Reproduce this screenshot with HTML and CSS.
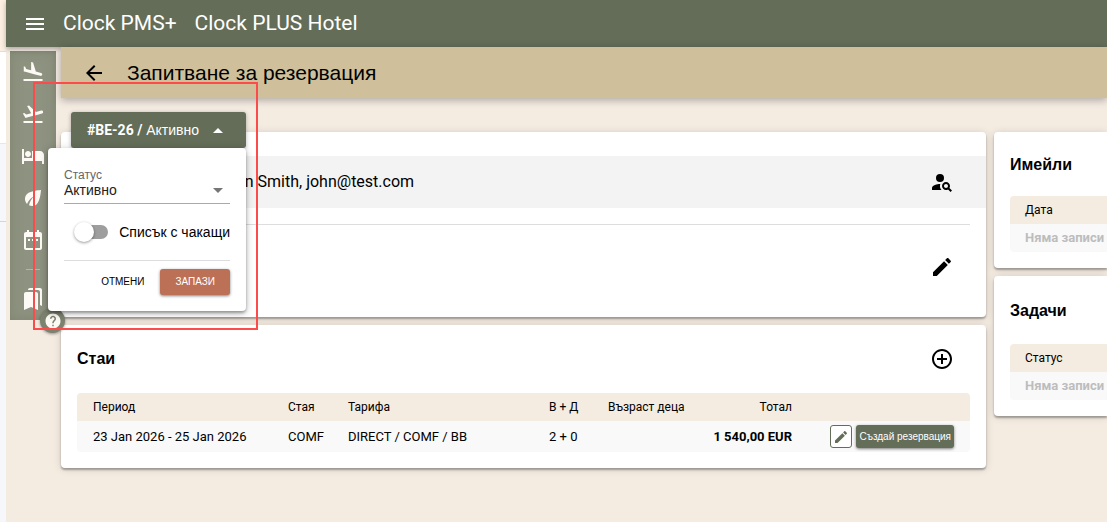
FILE: index.html
```html
<!DOCTYPE html>
<html lang="bg">
<head>
<meta charset="utf-8">
<title>Clock PMS+</title>
<link rel="stylesheet" href="styles.css">
</head>
<body>
<div class="edge"><div class="edge-top"></div><div class="edge-mid"></div><div class="edge-low"></div></div>
<div class="app">
  <header class="topbar">
    <button class="icon-btn" aria-label="Меню"><svg class="icon" viewBox="0 0 24 24"><path d="M3 18h18v-2H3v2zm0-5h18v-2H3v2zm0-7v2h18V6H3z"/></svg></button>
    <span class="brand">Clock PMS+</span>
    <span class="hotel">Clock PLUS Hotel</span>
  </header>
  <div class="body">
    <nav class="side">
      <a href="#" aria-label="Пристигащи"><svg class="icon" viewBox="0 0 24 24"><path d="M2.5 19h19v2h-19zm7.18-5.73l4.35 1.16 5.31 1.42c.8.21 1.62-.26 1.84-1.06.21-.8-.26-1.62-1.06-1.84l-5.31-1.42-2.76-9.02L10.12 2v8.28L5.15 8.95l-.93-2.32-1.45-.39v5.17l1.6.43 5.31 1.43z"/></svg></a>
      <a href="#" aria-label="Заминаващи"><svg class="icon" viewBox="0 0 24 24"><path d="M2.5 19h19v2h-19zm19.57-9.36c-.21-.8-1.04-1.28-1.84-1.06L14.92 10l-6.9-6.43-1.93.51 4.14 7.17-4.97 1.33-1.97-1.54-1.45.39 1.82 3.16.77 1.33 1.6-.43 5.31-1.42 4.35-1.16L21 11.49c.81-.23 1.28-1.05 1.07-1.85z"/></svg></a>
      <a href="#" aria-label="Настанени"><svg class="icon" viewBox="0 0 24 24"><path d="M7 13c1.66 0 3-1.34 3-3S8.66 7 7 7s-3 1.34-3 3 1.34 3 3 3zm12-6h-8v7H3V5H1v15h2v-3h18v3h2v-9c0-2.21-1.79-4-4-4z"/></svg></a>
      <a href="#" aria-label="Еко"><svg class="icon" viewBox="0 0 24 24"><path d="M6.05 8.05c-2.73 2.73-2.73 7.15-.02 9.88 1.47-3.4 4.09-6.24 7.36-7.93-2.77 2.34-4.71 5.61-5.39 9.32 2.6 1.23 5.8.78 7.95-1.37C19.43 14.47 20 4 20 4S9.53 4.57 6.05 8.05z"/></svg></a>
      <a href="#" aria-label="Календар"><svg class="icon" viewBox="0 0 24 24"><path d="M9 11H7v2h2v-2zm4 0h-2v2h2v-2zm4 0h-2v2h2v-2zm2-7h-1V2h-2v2H8V2H6v2H5c-1.11 0-1.99.9-1.99 2L3 20c0 1.1.89 2 2 2h14c1.1 0 2-.9 2-2V6c0-1.1-.9-2-2-2zm0 16H5V9h14v11z"/></svg></a>
      <span class="side-line"></span>
      <a href="#" aria-label="Отметки"><svg class="icon" viewBox="0 0 24 24"><path d="M19 18l2 1V3c0-1.1-.9-2-2-2H8.99C7.89 1 7 1.9 7 3h10c1.1 0 2 .9 2 2v13zM15 5H5c-1.1 0-2 .9-2 2v16l7-3 7 3V7c0-1.1-.9-2-2-2z"/></svg></a>
      <button class="help" aria-label="Помощ"><svg class="help-icon" viewBox="0 0 24 24"><path d="M12 2C6.48 2 2 6.48 2 12s4.48 10 10 10 10-4.48 10-10S17.52 2 12 2zm1 17h-2v-2h2v2zm2.07-7.75l-.9.92C13.45 12.9 13 13.5 13 15h-2v-.5c0-1.1.45-2.1 1.17-2.83l1.24-1.26c.37-.36.59-.86.59-1.41 0-1.1-.9-2-2-2s-2 .9-2 2H8c0-2.21 1.79-4 4-4s4 1.79 4 4c0 .88-.36 1.68-.93 2.25z"/></svg></button>
    </nav>
    <main class="main">
      <div class="titlebar">
        <button class="icon-btn" aria-label="Назад"><svg class="icon" viewBox="0 0 24 24"><path d="M20 11H7.83l5.59-5.59L12 4l-8 8 8 8 1.41-1.41L7.83 13H20v-2z"/></svg></button>
        <h1>Запитване за резервация</h1>
      </div>
      <div class="content">
        <div class="status">
          <button class="status-btn"><span class="status-text"><b>#BE-26 /</b> Активно</span><svg class="caret" viewBox="0 0 10 5"><path d="M0 5l5-5 5 5z"/></svg></button>
          <form class="menu">
            <label class="field-label" for="status">Статус</label>
            <div class="select-box">
              <select id="status"><option>Активно</option></select>
              <svg class="caret" viewBox="0 0 10 5"><path d="M0 0l5 5 5-5z"/></svg>
            </div>
            <div class="toggle">
              <input type="checkbox" id="wait"><label for="wait">Списък с чакащи</label>
            </div>
            <div class="actions">
              <button type="button" class="cancel">ОТМЕНИ</button>
              <button type="button" class="save">ЗАПАЗИ</button>
            </div>
          </form>
        </div>
        <div class="col">
          <section class="card guest">
            <div class="guest-row"><span>John Smith, john@test.com</span>
              <button class="icon-btn" aria-label="Търсене на гост"><svg class="icon" viewBox="0 0 24 24"><circle cx="10" cy="8" r="4"/><path d="M10.35 14.01C7.62 13.91 2 15.27 2 18v2h9.54c-2.47-2.76-1.23-5.89-1.19-5.99zM19.43 18.02c.36-.59.57-1.28.57-2.02 0-2.21-1.79-4-4-4s-4 1.79-4 4 1.79 4 4 4c.74 0 1.43-.22 2.02-.57L20.59 22 22 20.59l-2.57-2.57zM16 18c-1.1 0-2-.9-2-2s.9-2 2-2 2 .9 2 2-.9 2-2 2z"/></svg></button>
            </div>
            <div class="details">
              <button class="icon-btn" aria-label="Редактиране"><svg class="icon" viewBox="0 0 24 24"><path d="M3 17.25V21h3.75L17.81 9.94l-3.75-3.75L3 17.25zM20.71 7.04c.39-.39.39-1.02 0-1.41l-2.34-2.34c-.39-.39-1.02-.39-1.41 0l-1.83 1.83 3.75 3.75 1.83-1.83z"/></svg></button>
            </div>
          </section>
          <section class="card">
            <div class="card-head"><h2>Стаи</h2>
              <button class="icon-btn" aria-label="Добавяне"><svg class="icon" viewBox="0 0 24 24"><path d="M13 7h-2v4H7v2h4v4h2v-4h4v-2h-4V7zm-1-5C6.48 2 2 6.48 2 12s4.48 10 10 10 10-4.48 10-10S17.52 2 12 2zm0 18c-4.41 0-8-3.59-8-8s3.59-8 8-8 8 3.59 8 8-3.59 8-8 8z"/></svg></button>
            </div>
            <table class="rooms">
              <colgroup><col><col class="c-room"><col class="c-rate"><col class="c-pax"><col class="c-age"><col class="c-total"><col class="c-act"></colgroup>
              <thead><tr><th>Период</th><th>Стая</th><th>Тарифа</th><th>В + Д</th><th>Възраст деца</th><th class="num">Тотал</th><th></th></tr></thead>
              <tbody><tr><td>23 Jan 2026 - 25 Jan 2026</td><td>COMF</td><td>DIRECT / COMF / BB</td><td>2 + 0</td><td></td><td class="num"><b>1 540,00 EUR</b></td>
                <td><div class="row-actions">
                  <button class="edit" aria-label="Редактиране на стая"><svg viewBox="0 0 24 24"><path d="M3 17.25V21h3.75L17.81 9.94l-3.75-3.75L3 17.25zM20.71 7.04c.39-.39.39-1.02 0-1.41l-2.34-2.34c-.39-.39-1.02-.39-1.41 0l-1.83 1.83 3.75 3.75 1.83-1.83z"/></svg></button>
                  <button class="create">Създай резервация</button>
                </div></td></tr></tbody>
            </table>
          </section>
        </div>
        <aside class="col">
          <section class="card side-card"><h2>Имейли</h2>
            <table><thead><tr><th>Дата</th></tr></thead><tbody><tr><td class="empty">Няма записи</td></tr></tbody></table>
          </section>
          <section class="card side-card"><h2>Задачи</h2>
            <table><thead><tr><th>Статус</th></tr></thead><tbody><tr><td class="empty">Няма записи</td></tr></tbody></table>
          </section>
        </aside>
      </div>
    </main>
  </div>
</div>
<div class="highlight"></div>
</body>
</html>
```
FILE: styles.css
```css
* { box-sizing: border-box; }
body { margin: 0; min-height: 100vh; display: flex; overflow: hidden; background: #f4ebe1; color: #000; font: 14px/20px Roboto, "Liberation Sans", sans-serif; }
button, select { font: inherit; color: inherit; border: 0; margin: 0; padding: 0; background: none; }
h1, h2 { margin: 0; }
svg { display: block; fill: currentColor; }
.icon { width: 24px; height: 24px; }
.icon-btn { flex: none; }

.edge { flex: 0 0 6px; display: flex; flex-direction: column; background: #f5f7fa; }
.edge-top { height: 52px; background: #fdf0e3; border-bottom: 1px solid #d9e0e8; }
.edge-mid { height: 92px; background: #fff; border-bottom: 1px solid #e3e8ed; }
.edge-low { height: 78px; border-bottom: 1px solid #cbd8e4; }

.app { flex: 1; min-width: 0; display: flex; flex-direction: column; }
.topbar { position: relative; z-index: 1; height: 47px; flex: none; display: flex; align-items: center; padding: 0 17px; background: #646d58; color: #fff; font-size: 21px; line-height: 28px; box-shadow: 0 2px 5px rgba(0,0,0,.3); }
.brand { margin: 0 18px 0 16px; }
.topbar span { padding-bottom: 2px; }
.body { flex: 1; display: flex; align-items: flex-start; }

.side { position: relative; flex: 0 0 46px; margin: 4px 5px 0 4px; padding: 9px 0; display: flex; flex-direction: column; align-items: center; gap: 18px; background: #8e9280; color: #fdf9f5; box-shadow: inset 0 0 12px #7f8571; }
.side a { color: inherit; }
.side-line { width: 14px; height: 1px; margin: -1px 0; background: #b5b8a9; }
.help { position: absolute; right: -9px; bottom: -13px; width: 25px; height: 25px; border-radius: 50%; display: grid; place-items: center; background: #7b826d; color: #fdf9f5; z-index: 2; box-shadow: 0 1px 3px rgba(0,0,0,.4); }
.help-icon { width: 18px; height: 18px; }

.main { flex: 1; min-width: 0; }
.titlebar { position: relative; z-index: 2; height: 51px; display: flex; align-items: center; gap: 21px; padding-left: 21px; background: #cfc09b; box-shadow: 0 2px 8px rgba(0,0,0,.3); }
h1 { font: 400 21px/28px "Liberation Sans", sans-serif; }
.content { position: relative; display: grid; grid-template-columns: minmax(0, 1fr) 113px; gap: 8px; padding-top: 34px; }
.col { display: flex; flex-direction: column; gap: 8px; }
.card { background: #fff; border-radius: 4px; box-shadow: 0 2px 2px rgba(0,0,0,.3), 0 1px 8px rgba(0,0,0,.14); }

.guest { padding-top: 24px; }
.guest-row { height: 52px; display: flex; align-items: center; justify-content: space-between; padding: 0 32px 0 157px; background: #f3f3f3; font-size: 16px; line-height: 22px; }
.details { height: 93px; margin: 16px 16px 0; padding: 0 16px 8px 0; display: flex; align-items: center; justify-content: flex-end; border-top: 1px solid #ddd; }
.card-head { height: 68px; display: flex; align-items: center; justify-content: space-between; padding: 0 32px 0 16px; }
h2 { font: 700 16px/26px "Liberation Sans", sans-serif; }

table { border-collapse: separate; border-spacing: 0; border-radius: 4px; overflow: hidden; font-size: 12px; line-height: 16px; }
th { height: 28px; padding: 0 0 0 16px; text-align: left; font-weight: 400; background: #f4ebe1; white-space: nowrap; }
td { height: 31px; padding: 0 0 0 16px; background: #f9f9f9; white-space: nowrap; }
.rooms { width: calc(100% - 32px); margin: 0 16px; table-layout: fixed; }
.rooms td { font-size: 13px; }
.card:has(.rooms) { padding-bottom: 16px; }
.rooms .num { text-align: right; padding: 0 16px 0 0; }
.c-room { width: 60px; }
.c-rate { width: 201px; }
.c-pax { width: 59px; }
.c-age { width: 108px; }
.c-total { width: 108px; }
.c-act { width: 162px; }
.row-actions { display: flex; justify-content: flex-end; gap: 4px; padding-right: 16px; }
.edit { width: 22px; height: 23px; padding: 2px; border: 1px solid #646d58; border-radius: 3px; color: #646d58; background: #fff; }
.create { height: 23px; padding: 0 3px; border-radius: 3px; background: #646d58; color: #fff; font: 10px/16px "Liberation Sans", sans-serif; box-shadow: 0 1px 3px rgba(0,0,0,.5); }

.side-card { padding: 20px 0 16px 16px; border-radius: 4px 0 0 4px; }
.side-card table { width: 100%; margin-top: 18px; border-radius: 4px 0 0 4px; }
.side-card th, .side-card td { height: 28px; padding-left: 15px; }
.side-card + .side-card { padding-top: 22px; }
.side-card + .side-card table { margin-top: 20px; }
td.empty { color: #bdbdbd; font-weight: 700; font-size: 13px; }

.status { position: absolute; z-index: 3; left: 10px; top: 14px; }
.status-btn { display: flex; align-items: center; justify-content: space-between; width: 175px; height: 36px; padding: 0 23px 0 16px; border-radius: 3px; background: #646d58; color: #fff; box-shadow: 0 1px 4px rgba(0,0,0,.3); }
.status-text { font-family: "Liberation Sans", sans-serif; }
.status-text b { font-family: Roboto, sans-serif; }
.caret { width: 10px; height: 5px; }
.menu { position: absolute; right: 0; top: 36px; width: 198px; padding: 20px 16px 16px; background: #fff; border-radius: 4px; box-shadow: 0 2px 3px rgba(0,0,0,.3), 0 2px 8px rgba(0,0,0,.25); font-family: "Liberation Sans", sans-serif; }
.field-label { display: block; font-size: 12px; line-height: 14px; color: #666; }
.select-box { display: flex; align-items: center; border-bottom: 1px solid #aaa; padding: 0 7px 5px 0; color: #757575; }
.select-box select { flex: 1; height: 16px; line-height: 16px; appearance: none; color: #222; }
.toggle { display: flex; align-items: center; justify-content: space-between; padding: 18px 0 18px 18px; }
.toggle input { appearance: none; position: relative; width: 26px; height: 14px; margin: 0; border-radius: 7px; background: #9e9e9e; }
.toggle input::before { content: ""; position: absolute; left: -8px; top: -3px; width: 20px; height: 20px; border-radius: 50%; background: #fff; box-shadow: 0 1px 3px rgba(0,0,0,.4); }
.actions { display: flex; justify-content: flex-end; gap: 16px; padding-top: 8px; border-top: 1px solid #ddd; font-size: 10px; }
.save { height: 26px; padding: 0 15px; border-radius: 3px; background: #bc7056; color: #fff; box-shadow: 0 1px 3px rgba(0,0,0,.5); }

.highlight { position: absolute; left: 33px; top: 82px; width: 225px; height: 248px; border: 2px solid #fb4b4b; z-index: 5; pointer-events: none; }
```
